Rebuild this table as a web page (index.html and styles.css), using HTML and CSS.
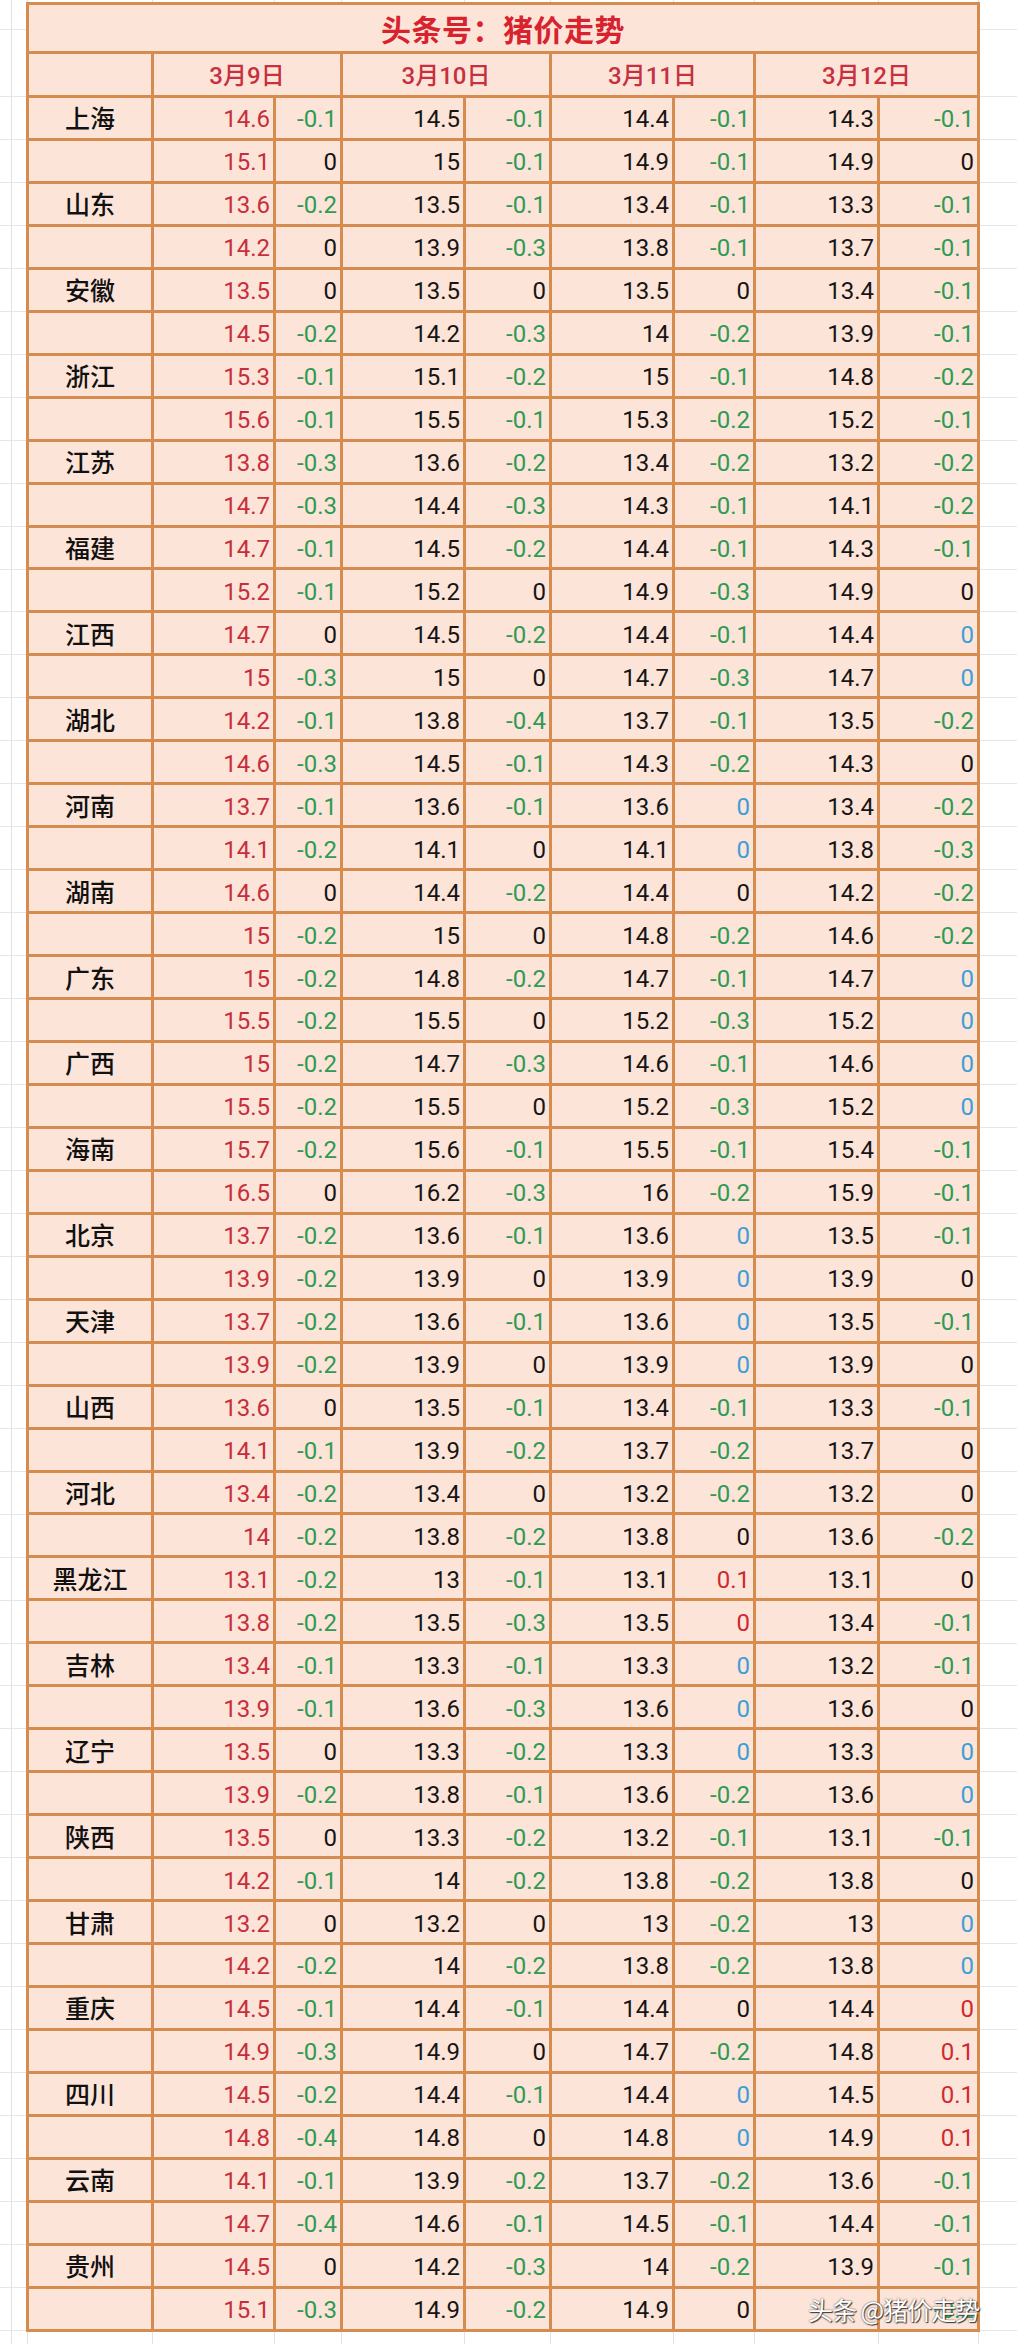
FILE: index.html
```html
<!DOCTYPE html>
<html lang="zh-CN">
<head>
<meta charset="utf-8">
<title>头条号：猪价走势</title>
<link rel="stylesheet" href="styles.css">
</head>
<body>
<div class="wrap">
<div class="sheet">
<div class="t">头条号：猪价走势</div>
<div class="h"></div><div class="h d">3月9日</div><div class="h d">3月10日</div><div class="h d">3月11日</div><div class="h d">3月12日</div>

<div class="p">上海</div><div class="r">14.6</div><div class="g">-0.1</div><div>14.5</div><div class="g">-0.1</div><div>14.4</div><div class="g">-0.1</div><div>14.3</div><div class="g">-0.1</div>
<div class="p"></div><div class="r">15.1</div><div>0</div><div>15</div><div class="g">-0.1</div><div>14.9</div><div class="g">-0.1</div><div>14.9</div><div>0</div>
<div class="p">山东</div><div class="r">13.6</div><div class="g">-0.2</div><div>13.5</div><div class="g">-0.1</div><div>13.4</div><div class="g">-0.1</div><div>13.3</div><div class="g">-0.1</div>
<div class="p"></div><div class="r">14.2</div><div>0</div><div>13.9</div><div class="g">-0.3</div><div>13.8</div><div class="g">-0.1</div><div>13.7</div><div class="g">-0.1</div>
<div class="p">安徽</div><div class="r">13.5</div><div>0</div><div>13.5</div><div>0</div><div>13.5</div><div>0</div><div>13.4</div><div class="g">-0.1</div>
<div class="p"></div><div class="r">14.5</div><div class="g">-0.2</div><div>14.2</div><div class="g">-0.3</div><div>14</div><div class="g">-0.2</div><div>13.9</div><div class="g">-0.1</div>
<div class="p">浙江</div><div class="r">15.3</div><div class="g">-0.1</div><div>15.1</div><div class="g">-0.2</div><div>15</div><div class="g">-0.1</div><div>14.8</div><div class="g">-0.2</div>
<div class="p"></div><div class="r">15.6</div><div class="g">-0.1</div><div>15.5</div><div class="g">-0.1</div><div>15.3</div><div class="g">-0.2</div><div>15.2</div><div class="g">-0.1</div>
<div class="p">江苏</div><div class="r">13.8</div><div class="g">-0.3</div><div>13.6</div><div class="g">-0.2</div><div>13.4</div><div class="g">-0.2</div><div>13.2</div><div class="g">-0.2</div>
<div class="p"></div><div class="r">14.7</div><div class="g">-0.3</div><div>14.4</div><div class="g">-0.3</div><div>14.3</div><div class="g">-0.1</div><div>14.1</div><div class="g">-0.2</div>
<div class="p">福建</div><div class="r">14.7</div><div class="g">-0.1</div><div>14.5</div><div class="g">-0.2</div><div>14.4</div><div class="g">-0.1</div><div>14.3</div><div class="g">-0.1</div>
<div class="p"></div><div class="r">15.2</div><div class="g">-0.1</div><div>15.2</div><div>0</div><div>14.9</div><div class="g">-0.3</div><div>14.9</div><div>0</div>
<div class="p">江西</div><div class="r">14.7</div><div>0</div><div>14.5</div><div class="g">-0.2</div><div>14.4</div><div class="g">-0.1</div><div>14.4</div><div class="b">0</div>
<div class="p"></div><div class="r">15</div><div class="g">-0.3</div><div>15</div><div>0</div><div>14.7</div><div class="g">-0.3</div><div>14.7</div><div class="b">0</div>
<div class="p">湖北</div><div class="r">14.2</div><div class="g">-0.1</div><div>13.8</div><div class="g">-0.4</div><div>13.7</div><div class="g">-0.1</div><div>13.5</div><div class="g">-0.2</div>
<div class="p"></div><div class="r">14.6</div><div class="g">-0.3</div><div>14.5</div><div class="g">-0.1</div><div>14.3</div><div class="g">-0.2</div><div>14.3</div><div>0</div>
<div class="p">河南</div><div class="r">13.7</div><div class="g">-0.1</div><div>13.6</div><div class="g">-0.1</div><div>13.6</div><div class="b">0</div><div>13.4</div><div class="g">-0.2</div>
<div class="p"></div><div class="r">14.1</div><div class="g">-0.2</div><div>14.1</div><div>0</div><div>14.1</div><div class="b">0</div><div>13.8</div><div class="g">-0.3</div>
<div class="p">湖南</div><div class="r">14.6</div><div>0</div><div>14.4</div><div class="g">-0.2</div><div>14.4</div><div>0</div><div>14.2</div><div class="g">-0.2</div>
<div class="p"></div><div class="r">15</div><div class="g">-0.2</div><div>15</div><div>0</div><div>14.8</div><div class="g">-0.2</div><div>14.6</div><div class="g">-0.2</div>
<div class="p">广东</div><div class="r">15</div><div class="g">-0.2</div><div>14.8</div><div class="g">-0.2</div><div>14.7</div><div class="g">-0.1</div><div>14.7</div><div class="b">0</div>
<div class="p"></div><div class="r">15.5</div><div class="g">-0.2</div><div>15.5</div><div>0</div><div>15.2</div><div class="g">-0.3</div><div>15.2</div><div class="b">0</div>
<div class="p">广西</div><div class="r">15</div><div class="g">-0.2</div><div>14.7</div><div class="g">-0.3</div><div>14.6</div><div class="g">-0.1</div><div>14.6</div><div class="b">0</div>
<div class="p"></div><div class="r">15.5</div><div class="g">-0.2</div><div>15.5</div><div>0</div><div>15.2</div><div class="g">-0.3</div><div>15.2</div><div class="b">0</div>
<div class="p">海南</div><div class="r">15.7</div><div class="g">-0.2</div><div>15.6</div><div class="g">-0.1</div><div>15.5</div><div class="g">-0.1</div><div>15.4</div><div class="g">-0.1</div>
<div class="p"></div><div class="r">16.5</div><div>0</div><div>16.2</div><div class="g">-0.3</div><div>16</div><div class="g">-0.2</div><div>15.9</div><div class="g">-0.1</div>
<div class="p">北京</div><div class="r">13.7</div><div class="g">-0.2</div><div>13.6</div><div class="g">-0.1</div><div>13.6</div><div class="b">0</div><div>13.5</div><div class="g">-0.1</div>
<div class="p"></div><div class="r">13.9</div><div class="g">-0.2</div><div>13.9</div><div>0</div><div>13.9</div><div class="b">0</div><div>13.9</div><div>0</div>
<div class="p">天津</div><div class="r">13.7</div><div class="g">-0.2</div><div>13.6</div><div class="g">-0.1</div><div>13.6</div><div class="b">0</div><div>13.5</div><div class="g">-0.1</div>
<div class="p"></div><div class="r">13.9</div><div class="g">-0.2</div><div>13.9</div><div>0</div><div>13.9</div><div class="b">0</div><div>13.9</div><div>0</div>
<div class="p">山西</div><div class="r">13.6</div><div>0</div><div>13.5</div><div class="g">-0.1</div><div>13.4</div><div class="g">-0.1</div><div>13.3</div><div class="g">-0.1</div>
<div class="p"></div><div class="r">14.1</div><div class="g">-0.1</div><div>13.9</div><div class="g">-0.2</div><div>13.7</div><div class="g">-0.2</div><div>13.7</div><div>0</div>
<div class="p">河北</div><div class="r">13.4</div><div class="g">-0.2</div><div>13.4</div><div>0</div><div>13.2</div><div class="g">-0.2</div><div>13.2</div><div>0</div>
<div class="p"></div><div class="r">14</div><div class="g">-0.2</div><div>13.8</div><div class="g">-0.2</div><div>13.8</div><div>0</div><div>13.6</div><div class="g">-0.2</div>
<div class="p">黑龙江</div><div class="r">13.1</div><div class="g">-0.2</div><div>13</div><div class="g">-0.1</div><div>13.1</div><div class="x">0.1</div><div>13.1</div><div>0</div>
<div class="p"></div><div class="r">13.8</div><div class="g">-0.2</div><div>13.5</div><div class="g">-0.3</div><div>13.5</div><div class="x">0</div><div>13.4</div><div class="g">-0.1</div>
<div class="p">吉林</div><div class="r">13.4</div><div class="g">-0.1</div><div>13.3</div><div class="g">-0.1</div><div>13.3</div><div class="b">0</div><div>13.2</div><div class="g">-0.1</div>
<div class="p"></div><div class="r">13.9</div><div class="g">-0.1</div><div>13.6</div><div class="g">-0.3</div><div>13.6</div><div class="b">0</div><div>13.6</div><div>0</div>
<div class="p">辽宁</div><div class="r">13.5</div><div>0</div><div>13.3</div><div class="g">-0.2</div><div>13.3</div><div class="b">0</div><div>13.3</div><div class="b">0</div>
<div class="p"></div><div class="r">13.9</div><div class="g">-0.2</div><div>13.8</div><div class="g">-0.1</div><div>13.6</div><div class="g">-0.2</div><div>13.6</div><div class="b">0</div>
<div class="p">陕西</div><div class="r">13.5</div><div>0</div><div>13.3</div><div class="g">-0.2</div><div>13.2</div><div class="g">-0.1</div><div>13.1</div><div class="g">-0.1</div>
<div class="p"></div><div class="r">14.2</div><div class="g">-0.1</div><div>14</div><div class="g">-0.2</div><div>13.8</div><div class="g">-0.2</div><div>13.8</div><div>0</div>
<div class="p">甘肃</div><div class="r">13.2</div><div>0</div><div>13.2</div><div>0</div><div>13</div><div class="g">-0.2</div><div>13</div><div class="b">0</div>
<div class="p"></div><div class="r">14.2</div><div class="g">-0.2</div><div>14</div><div class="g">-0.2</div><div>13.8</div><div class="g">-0.2</div><div>13.8</div><div class="b">0</div>
<div class="p">重庆</div><div class="r">14.5</div><div class="g">-0.1</div><div>14.4</div><div class="g">-0.1</div><div>14.4</div><div>0</div><div>14.4</div><div class="x">0</div>
<div class="p"></div><div class="r">14.9</div><div class="g">-0.3</div><div>14.9</div><div>0</div><div>14.7</div><div class="g">-0.2</div><div>14.8</div><div class="x">0.1</div>
<div class="p">四川</div><div class="r">14.5</div><div class="g">-0.2</div><div>14.4</div><div class="g">-0.1</div><div>14.4</div><div class="b">0</div><div>14.5</div><div class="x">0.1</div>
<div class="p"></div><div class="r">14.8</div><div class="g">-0.4</div><div>14.8</div><div>0</div><div>14.8</div><div class="b">0</div><div>14.9</div><div class="x">0.1</div>
<div class="p">云南</div><div class="r">14.1</div><div class="g">-0.1</div><div>13.9</div><div class="g">-0.2</div><div>13.7</div><div class="g">-0.2</div><div>13.6</div><div class="g">-0.1</div>
<div class="p"></div><div class="r">14.7</div><div class="g">-0.4</div><div>14.6</div><div class="g">-0.1</div><div>14.5</div><div class="g">-0.1</div><div>14.4</div><div class="g">-0.1</div>
<div class="p">贵州</div><div class="r">14.5</div><div>0</div><div>14.2</div><div class="g">-0.3</div><div>14</div><div class="g">-0.2</div><div>13.9</div><div class="g">-0.1</div>
<div class="p"></div><div class="r">15.1</div><div class="g">-0.3</div><div>14.9</div><div class="g">-0.2</div><div>14.9</div><div>0</div><div></div><div class="g">-0.2</div>
</div>
<div class="mark">头条 @猪价走势</div>
</div>
</body>
</html>
```
FILE: styles.css
```css
html {
  min-height: 2344px;
  background-color: #ffffff;
  background-image:
    linear-gradient(#e2e2e2, #e2e2e2),
    linear-gradient(#e2e2e2, #e2e2e2),
    linear-gradient(#e2e2e2, #e2e2e2),
    linear-gradient(#e2e2e2, #e2e2e2),
    linear-gradient(#e2e2e2, #e2e2e2),
    linear-gradient(#e2e2e2, #e2e2e2),
    linear-gradient(#e2e2e2, #e2e2e2),
    linear-gradient(#e2e2e2, #e2e2e2),
    linear-gradient(#e2e2e2, #e2e2e2),
    linear-gradient(#e2e2e2, #e2e2e2),
    linear-gradient(#e2e2e2, #e2e2e2),
    repeating-linear-gradient(to bottom, transparent 0 41.96px, #e6e6e6 41.96px 42.96px);
  background-size:
    1px 100%, 1px 100%, 1px 100%, 1px 100%, 1px 100%, 1px 100%,
    1px 100%, 1px 100%, 1px 100%, 1px 100%, 1px 100%, 100% 100%;
  background-position:
    11px 0, 27px 0, 152px 0, 274px 0, 341px 0, 464px 0,
    550px 0, 673px 0, 754px 0, 878px 0, 978px 0, 0 54px;
  background-repeat: no-repeat, no-repeat, no-repeat, no-repeat, no-repeat, no-repeat,
    no-repeat, no-repeat, no-repeat, no-repeat, no-repeat, repeat;
}

body {
  margin: 0;
  font-family: Roboto, "Noto Sans CJK SC", "Noto Sans", sans-serif;
  color: #151515;
}

.wrap {
  position: relative;
  padding: 2px 0 0 26px;
}

.sheet {
  display: grid;
  width: max-content;
  grid-template-columns: 122px 119px 64px 120px 83px 120px 78px 121px 97px;
  grid-template-rows: 46px 41px repeat(52, 39.96px);
  gap: 3px;
  padding: 3px;
  background: #d68b4f;
}

.sheet > div {
  background: #fde4d8;
  font-size: 24px;
  line-height: 1;
  display: flex;
  align-items: center;
  justify-content: flex-end;
  padding: 3px 3px 0 0;
}

.sheet > .t {
  grid-column: 1 / -1;
  justify-content: center;
  padding: 0;
  font-family: "Noto Sans CJK SC", sans-serif;
  font-weight: 700;
  font-size: 30px;
  color: #d8222e;
  letter-spacing: 0.5px;
}

.sheet > .h {
  justify-content: center;
  padding: 2px 0 0;
}

.sheet > .d {
  grid-column: span 2;
  color: #c6303f;
  font-size: 24px;
  font-weight: 500;
}

.sheet > .p {
  justify-content: center;
  padding: 0;
  font-family: "Noto Sans CJK SC", sans-serif;
  font-weight: 500;
  font-size: 25px;
  color: #111111;
}

.sheet > .r {
  color: #c72e3b;
}

.sheet > .g {
  color: #2f9a55;
}

.sheet > .b {
  color: #3c9fd6;
}

.sheet > .x {
  color: #cf2a2f;
}

.mark {
  position: absolute;
  left: 808px;
  top: 2291px;
  font-family: "Noto Sans CJK SC", sans-serif;
  font-size: 25px;
  color: #ffffff;
  letter-spacing: -1px;
  text-shadow: 0 0 2px #444444, 1px 1px 1px #333333;
  white-space: nowrap;
}
```
